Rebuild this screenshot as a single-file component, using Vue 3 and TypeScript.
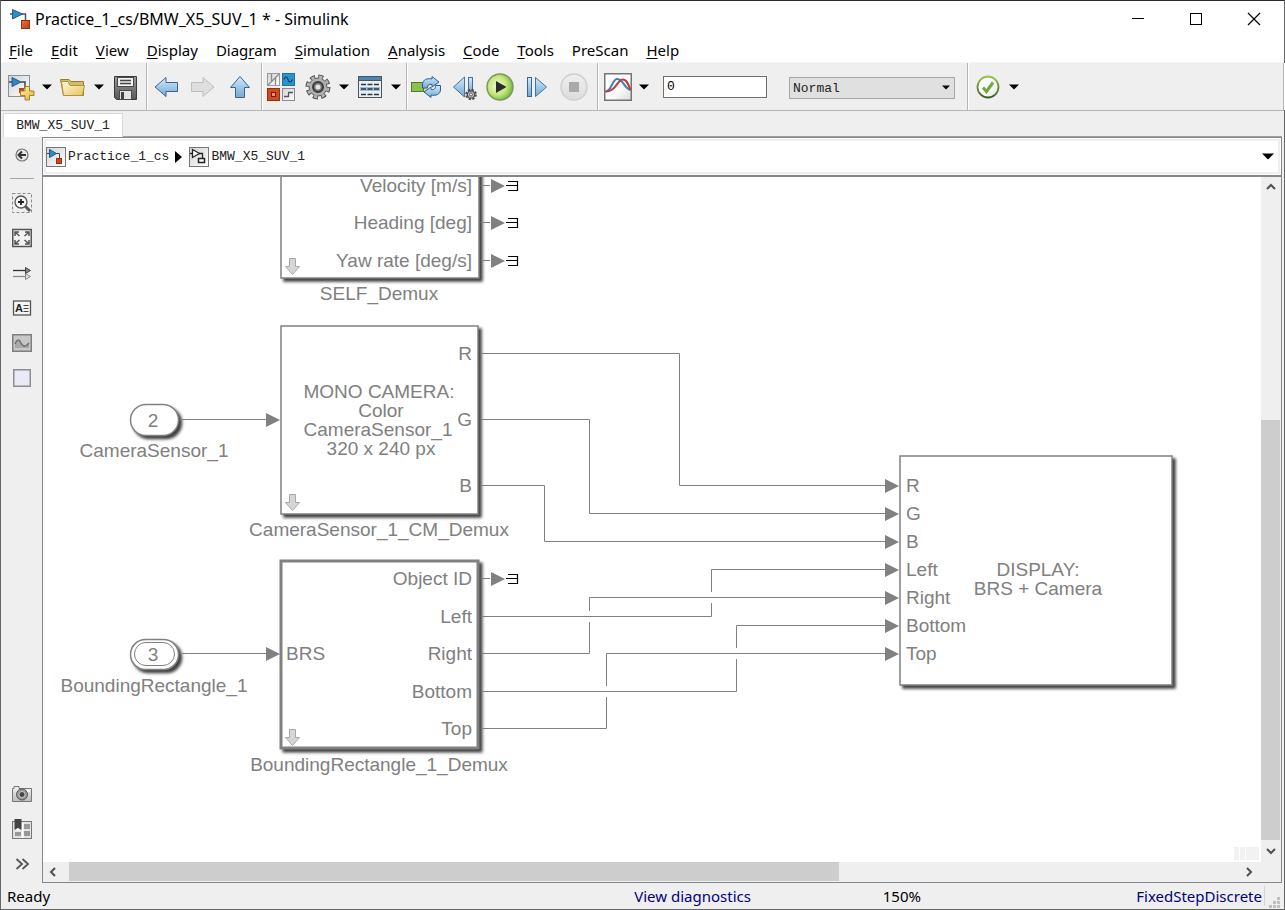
<script setup lang="ts">
import { ref } from 'vue'

interface MenuEntry {
  before: string
  key: string
  after: string
}

interface Port {
  text: string
  y: number
}

const menus: MenuEntry[] = [
  { before: '', key: 'F', after: 'ile' },
  { before: '', key: 'E', after: 'dit' },
  { before: '', key: 'V', after: 'iew' },
  { before: '', key: 'D', after: 'isplay' },
  { before: 'Diag', key: 'r', after: 'am' },
  { before: '', key: 'S', after: 'imulation' },
  { before: '', key: 'A', after: 'nalysis' },
  { before: '', key: 'C', after: 'ode' },
  { before: '', key: 'T', after: 'ools' },
  { before: 'PreScan', key: '', after: '' },
  { before: '', key: 'H', after: 'elp' },
]

const stopTime = ref('0')
const mode = ref('Normal')

// Diagram coordinates; the view is scrolled by the translate on the root group.
const selfPorts: Port[] = [
  { text: 'Velocity [m/s]', y: 186 },
  { text: 'Heading [deg]', y: 223 },
  { text: 'Yaw rate [deg/s]', y: 261 },
]
const cameraPorts: Port[] = [
  { text: 'R', y: 354 },
  { text: 'G', y: 420 },
  { text: 'B', y: 486 },
]
const boxPorts: Port[] = [
  { text: 'Object ID', y: 579 },
  { text: 'Left', y: 617 },
  { text: 'Right', y: 654 },
  { text: 'Bottom', y: 692 },
  { text: 'Top', y: 729 },
]
const displayPorts: Port[] = [
  { text: 'R', y: 486 },
  { text: 'G', y: 514 },
  { text: 'B', y: 542 },
  { text: 'Left', y: 570 },
  { text: 'Right', y: 598 },
  { text: 'Bottom', y: 626 },
  { text: 'Top', y: 654 },
]
const terminators: number[] = [186, 223, 261, 579]
const drillArrows: number[] = [258, 494, 729]
const wires: string[] = [
  'M481 353.5H679.5V485.5H886',
  'M481 419.5H589.5V513.5H886',
  'M481 485.5H544.5V541.5H886',
  'M481 616.5H711.5V603M711.5 592V569.5H886',
  'M481 653.5H589.5V622M589.5 611V597.5H886',
  'M481 691.5H736.5V659M736.5 648V625.5H886',
  'M481 728.5H606.5V697M606.5 686V653.5H886',
  'M180 419.5H267',
  'M180 653.5H267',
]
const arrowHeads: { x: number; y: number }[] = [
  { x: 266, y: 420 },
  { x: 266, y: 654 },
  ...displayPorts.map((p) => ({ x: 885, y: p.y })),
]
</script>

<template>
  <div class="window">
    <svg class="defs" width="0" height="0" aria-hidden="true">
      <defs>
        <linearGradient id="gBlue" x1="0" y1="0" x2="0" y2="1">
          <stop offset="0" stop-color="#d3eafa" />
          <stop offset="1" stop-color="#6fa9d6" />
        </linearGradient>
        <linearGradient id="gPage" x1="0" y1="0" x2="1" y2="1">
          <stop offset="0" stop-color="#d2d3d5" />
          <stop offset="1" stop-color="#ffffff" />
        </linearGradient>
        <linearGradient id="gPlot" x1="0" y1="0" x2="1" y2="1">
          <stop offset="0" stop-color="#ffffff" />
          <stop offset="0.6" stop-color="#fafafa" />
          <stop offset="1" stop-color="#dcdcdc" />
        </linearGradient>
        <linearGradient id="gGray" x1="0" y1="0" x2="0" y2="1">
          <stop offset="0" stop-color="#f0f0f0" />
          <stop offset="1" stop-color="#bdbdbd" />
        </linearGradient>
        <linearGradient id="gStop" x1="0" y1="0" x2="0" y2="1">
          <stop offset="0" stop-color="#efefef" />
          <stop offset="1" stop-color="#dcdcdc" />
        </linearGradient>
        <linearGradient id="gDark" x1="0" y1="0" x2="0" y2="1">
          <stop offset="0" stop-color="#9a9a9a" />
          <stop offset="1" stop-color="#585858" />
        </linearGradient>
        <linearGradient id="gFolder" x1="0" y1="0" x2="1" y2="1">
          <stop offset="0" stop-color="#fffbe0" />
          <stop offset="1" stop-color="#e7c45c" />
        </linearGradient>
        <linearGradient id="gPlus" x1="0" y1="0" x2="1" y2="1">
          <stop offset="0" stop-color="#fff8b8" />
          <stop offset="1" stop-color="#dfae2c" />
        </linearGradient>
        <linearGradient id="gRed" x1="0" y1="0" x2="1" y2="1">
          <stop offset="0" stop-color="#e8734a" />
          <stop offset="1" stop-color="#c23a12" />
        </linearGradient>
        <radialGradient id="gGreen" cx="0.4" cy="0.45" r="0.65">
          <stop offset="0" stop-color="#f0fad8" />
          <stop offset="0.55" stop-color="#c4e67c" />
          <stop offset="1" stop-color="#5fae3a" />
        </radialGradient>
        <linearGradient id="gRing" x1="0" y1="0" x2="0" y2="1">
          <stop offset="0" stop-color="#9ac54b" />
          <stop offset="1" stop-color="#3c5f22" />
        </linearGradient>
      </defs>
    </svg>

    <header class="titlebar">
      <svg class="app-icon" width="22" height="22" viewBox="0 0 22 22">
        <path d="M0 6H4M11 6H15.500V13" fill="none" stroke="#4d5560" stroke-width="1.500" />
        <path d="M2.500 1.500V11L12.500 6Z" fill="#2f8ccb" stroke="#215f8c" />
        <rect x="11.500" y="12.500" width="8" height="8" fill="url(#gRed)" stroke="#94300f" />
      </svg>
      <h1 class="title">Practice_1_cs/BMW_X5_SUV_1 * - Simulink</h1>
      <div class="controls">
        <button type="button" aria-label="Minimize">
          <svg width="14" height="14" viewBox="0 0 14 14"><path d="M1 6.500H13" stroke="#000" /></svg>
        </button>
        <button type="button" aria-label="Maximize">
          <svg width="14" height="14" viewBox="0 0 14 14"><rect x="1.500" y="1.500" width="11" height="11" fill="none" stroke="#000" /></svg>
        </button>
        <button type="button" aria-label="Close">
          <svg width="14" height="14" viewBox="0 0 14 14"><path d="M1 1L13 13M13 1L1 13" stroke="#000" stroke-width="1.200" /></svg>
        </button>
      </div>
    </header>

    <nav class="menubar">
      <button v-for="m in menus" :key="m.before + m.key" type="button">{{ m.before }}<u v-if="m.key">{{ m.key }}</u>{{ m.after }}</button>
    </nav>

    <div class="toolbar">
      <div class="group file">
        <button class="tool" type="button" aria-label="New model">
          <svg viewBox="0 0 28 28">
            <rect x="1.500" y="2.500" width="21" height="21" fill="url(#gPage)" stroke="#8b9095" />
            <path d="M2 9H6M14 9H18V16" fill="none" stroke="#3c4650" stroke-width="1.500" />
            <path d="M5 4.500V13.500L14 9Z" fill="#3187c4" stroke="#1e5a87" />
            <rect x="12" y="15" width="5" height="5" fill="#c8431c" />
            <path d="M18 13.500H22.500V18H27V22.500H22.500V27H18V22.500H13.500V18H18Z" fill="url(#gPlus)" stroke="#a8812a" />
          </svg>
        </button>
        <button class="dropdown" type="button" aria-label="New options"><svg viewBox="0 0 10 6"><path d="M0 0.500H10L5 5.500Z" /></svg></button>
        <button class="tool" type="button" aria-label="Open">
          <svg viewBox="0 0 28 28">
            <path d="M4.500 22.500L1.500 6.500H10L12 8.500H24.500V22.500Z" fill="#d9b966" stroke="#9c7a2c" />
            <path d="M4.500 22.500L2.500 8.500H9L11 12.500H25.500L23.500 22.500Z" fill="url(#gFolder)" stroke="#b3923f" />
          </svg>
        </button>
        <button class="dropdown" type="button" aria-label="Open options"><svg viewBox="0 0 10 6"><path d="M0 0.500H10L5 5.500Z" /></svg></button>
        <button class="tool" type="button" aria-label="Save">
          <svg viewBox="0 0 28 28">
            <path d="M3.500 3.500H25.500V26.500H5.500L3.500 24.500Z" fill="url(#gDark)" stroke="#3a3a3a" />
            <rect x="6.500" y="4.500" width="16" height="9" fill="#f1f1f1" stroke="#4a4a4a" />
            <path d="M9 7.500H20M9 10.500H20" stroke="#444" stroke-width="1.500" />
            <rect x="8.500" y="17.500" width="12" height="9" fill="#e3e3e3" stroke="#4a4a4a" />
            <rect x="10" y="19" width="3" height="7" fill="#444" />
          </svg>
        </button>
      </div>
      <div class="group nav">
        <button class="tool" type="button" aria-label="Back">
          <svg viewBox="0 0 28 28"><path d="M2 14L13 4.500V9.500H24.500V18.500H13V23.500Z" fill="url(#gBlue)" stroke="#3f648a" stroke-linejoin="round" /></svg>
        </button>
        <button class="tool" type="button" aria-label="Forward">
          <svg viewBox="0 0 28 28"><path d="M24 14L13 4.500V9.500H1.500V18.500H13V23.500Z" fill="#dedede" stroke="#bdbdbd" stroke-linejoin="round" /></svg>
        </button>
        <button class="tool" type="button" aria-label="Up">
          <svg viewBox="0 0 28 28"><path d="M13 3.500L22.500 14.500H17.500V24.500H8.500V14.500H3.500Z" fill="url(#gBlue)" stroke="#3f648a" stroke-linejoin="round" /></svg>
        </button>
      </div>
      <div class="group model">
        <button class="tool" type="button" aria-label="Library browser">
          <svg viewBox="0 0 28 28">
            <rect x="0.500" y="0.500" width="12" height="12" fill="url(#gPage)" stroke="#9a9a9a" />
            <path d="M1 12L12 1M4.500 1V8M8.500 4.500V12" stroke="#8a8a8a" fill="none" stroke-width="1.300" />
            <rect x="15.500" y="0.500" width="12" height="12" fill="#2a94cf" stroke="#2272a0" />
            <path d="M17 6.500C18 3 20 3 21 6.500S24 10 25.500 6.500" fill="none" stroke="#0c4a73" stroke-width="1.300" />
            <rect x="0.500" y="15.500" width="12" height="12" fill="#d14a1f" stroke="#94300f" />
            <rect x="4.500" y="19.500" width="4" height="4" fill="#f09070" stroke="#6e1f08" />
            <rect x="15.500" y="15.500" width="12" height="12" fill="url(#gPage)" stroke="#8a8a8a" />
            <path d="M17 23.500H21.500V19.500H26" fill="none" stroke="#555" stroke-width="1.300" />
          </svg>
        </button>
        <button class="tool" type="button" aria-label="Model configuration">
          <svg viewBox="0 0 28 28">
            <circle cx="14" cy="14" r="10.500" fill="none" stroke="#4c4c4c" stroke-width="4" stroke-dasharray="5 3.247" />
            <circle cx="14" cy="14" r="10.300" fill="none" stroke="#b4b4b4" stroke-width="2.400" stroke-dasharray="3.300 4.790" stroke-dashoffset="-0.800" />
            <circle cx="14" cy="14" r="9" fill="#b0b0b0" stroke="#5c5c5c" />
            <circle cx="14" cy="14" r="9" fill="none" stroke="#b4b4b4" stroke-width="1.400" stroke-dasharray="2.800 4.270" stroke-dashoffset="-0.700" />
            <circle cx="14" cy="14" r="5" fill="#7d7d7d" stroke="#3c3c3c" stroke-width="2" />
            <circle cx="14" cy="14" r="2.500" fill="#e4e4e4" />
          </svg>
        </button>
        <button class="dropdown" type="button" aria-label="Configuration options"><svg viewBox="0 0 10 6"><path d="M0 0.500H10L5 5.500Z" /></svg></button>
        <button class="tool" type="button" aria-label="Model explorer">
          <svg viewBox="0 0 28 28">
            <rect x="2.500" y="3.500" width="23" height="21" fill="#eceff1" stroke="#4b545c" />
            <rect x="3" y="4" width="22" height="3" fill="#4d86b5" />
            <path d="M3 7.500H25" stroke="#4b545c" />
            <rect x="4" y="14" width="20" height="4" fill="#8fc1e6" />
            <path d="M5 11.500H10M11.500 11.500H16.500M18 11.500H23M5 16H10M11.500 16H16.500M18 16H23M5 21.500H10M11.500 21.500H16.500M18 21.500H23" stroke="#333" stroke-width="1.500" />
          </svg>
        </button>
        <button class="dropdown" type="button" aria-label="Explorer options"><svg viewBox="0 0 10 6"><path d="M0 0.500H10L5 5.500Z" /></svg></button>
      </div>
      <div class="group run">
        <button class="tool" type="button" aria-label="Fast restart">
          <svg viewBox="0 0 28 28">
            <rect x="-0.500" y="9.500" width="12" height="9" fill="#8cc152" stroke="#4f7a26" />
            <rect x="12" y="10" width="3" height="8" fill="#bfe08f" />
            <path d="M10.500 15V11C11 6.500 15 5 20 6V3.500L27 9L20 14V11.500C17 11 15.500 12 15.500 15Z" fill="url(#gBlue)" stroke="#2f5f92" stroke-linejoin="round" />
            <path d="M28.500 12.500V17C28 21.500 24 23 19 22V24.500L12 19L19 14V16.500C22 17 23.500 16 23.500 12.500Z" fill="url(#gBlue)" stroke="#2f5f92" stroke-linejoin="round" />
          </svg>
        </button>
        <button class="tool" type="button" aria-label="Step back">
          <svg viewBox="0 0 28 28">
            <path d="M15.500 4V24L4.500 14Z" fill="url(#gBlue)" stroke="#4a7096" stroke-linejoin="round" />
            <rect x="19.500" y="4.500" width="4" height="16" fill="url(#gBlue)" stroke="#4a7096" />
            <circle cx="22" cy="21.500" r="4.800" fill="none" stroke="#4a4a4a" stroke-width="2" stroke-dasharray="2.200 1.570" />
            <circle cx="22" cy="21.500" r="3.700" fill="#bbb" stroke="#4a4a4a" stroke-width="1.200" />
            <circle cx="22" cy="21.500" r="1.500" fill="#f4f4f4" stroke="#555" />
          </svg>
        </button>
        <button class="tool" type="button" aria-label="Run">
          <svg viewBox="0 0 28 28">
            <circle cx="14" cy="14" r="13" fill="url(#gGreen)" stroke="#7f9a55" stroke-width="1.500" />
            <path d="M10 8V20L20.500 14Z" fill="#2c2c2c" />
          </svg>
        </button>
        <button class="tool" type="button" aria-label="Step forward">
          <svg viewBox="0 0 28 28">
            <rect x="4.500" y="4.500" width="4" height="19" fill="url(#gBlue)" stroke="#3f648a" />
            <path d="M12.500 4.500V23.500L23.500 14Z" fill="url(#gBlue)" stroke="#4a7096" stroke-linejoin="round" />
          </svg>
        </button>
        <button class="tool" type="button" aria-label="Stop">
          <svg viewBox="0 0 28 28">
            <circle cx="14" cy="14" r="13" fill="url(#gStop)" stroke="#cfcfcf" stroke-width="1.500" />
            <rect x="9" y="9" width="10" height="10" fill="#a9a9a9" />
          </svg>
        </button>
      </div>
      <div class="group sim">
        <button class="tool" type="button" aria-label="Data inspector">
          <svg viewBox="0 0 28 28">
            <rect x="0.750" y="0.750" width="26.500" height="26.500" fill="url(#gPlot)" stroke="#757575" stroke-width="1.500" />
            <path d="M1.500 18C7 20 8 6 13 6C19 6 20 15 26.500 17" fill="none" stroke="#3b7fc0" stroke-width="2" />
            <path d="M1.500 18.500C12 19 13 6.500 19 6.500C23 6.500 24 11 26.500 17" fill="none" stroke="#c23b3b" stroke-width="2" />
          </svg>
        </button>
        <button class="dropdown" type="button" aria-label="Inspector options"><svg viewBox="0 0 10 6"><path d="M0 0.500H10L5 5.500Z" /></svg></button>
        <input v-model="stopTime" class="stop-time" type="text" aria-label="Stop time" />
        <div class="mode">
          <select v-model="mode" aria-label="Simulation mode">
            <option>Normal</option>
          </select>
          <svg viewBox="0 0 8 5" aria-hidden="true"><path d="M0 0.500H8L4 4.500Z" /></svg>
        </div>
      </div>
      <div class="group check">
        <button class="tool" type="button" aria-label="Model advisor">
          <svg viewBox="0 0 28 28">
            <circle cx="14" cy="14" r="10.500" fill="url(#gPlot)" stroke="url(#gRing)" stroke-width="1.800" />
            <path d="M9 14.500L12.500 18.500L19 9.500" fill="none" stroke="#74a83c" stroke-width="3" />
          </svg>
        </button>
        <button class="dropdown" type="button" aria-label="Advisor options"><svg viewBox="0 0 10 6"><path d="M0 0.500H10L5 5.500Z" /></svg></button>
      </div>
    </div>

    <div class="tabs">
      <button class="tab" type="button">BMW_X5_SUV_1</button>
      <div class="tab-rest"></div>
    </div>

    <main class="main">
      <aside class="palette">
        <button type="button" aria-label="Hide browser">
          <svg viewBox="0 0 20 20">
            <circle cx="10" cy="10" r="6" fill="#e8e8e8" stroke="#777" stroke-width="1.200" />
            <path d="M14 10H8M10 6.500L6.500 10L10 13.500" fill="none" stroke="#333" stroke-width="2" />
          </svg>
        </button>
        <hr />
        <button type="button" aria-label="Zoom">
          <svg viewBox="0 0 20 20">
            <rect x="0.500" y="0.500" width="19" height="19" fill="none" stroke="#888" stroke-dasharray="3 2" />
            <circle cx="9" cy="9" r="6" fill="#f6f6f6" stroke="#555" stroke-width="1.300" />
            <path d="M6 9H12M9 6V12" stroke="#222" stroke-width="1.800" />
            <path d="M13.500 13.500L18 18" stroke="#555" stroke-width="3" />
          </svg>
        </button>
        <button type="button" aria-label="Fit to view">
          <svg viewBox="0 0 20 20">
            <rect x="0.750" y="1.500" width="18.500" height="17" fill="#f2f2f2" stroke="#555" stroke-width="1.500" />
            <path d="M3 8V4H7M3.500 4.500L7.500 8M17 8V4H13M16.500 4.500L12.500 8M3 12V16H7M3.500 15.500L7.500 12M17 12V16H13M16.500 15.500L12.500 12" fill="none" stroke="#555" stroke-width="1.500" />
          </svg>
        </button>
        <button type="button" aria-label="Sample time">
          <svg viewBox="0 0 20 20">
            <path d="M1 13.500H14" stroke="#888" stroke-width="1.300" />
            <path d="M13.500 10.500V16.500L18.500 13.500Z" fill="#ddd" stroke="#888" />
            <path d="M1 7.500H14" stroke="#333" stroke-width="1.300" />
            <path d="M13.500 4.500V10.500L18.500 7.500Z" fill="#888" stroke="#444" />
          </svg>
        </button>
        <button type="button" aria-label="Annotation">
          <svg viewBox="0 0 20 20">
            <rect x="1.500" y="3" width="17" height="14" fill="#f5f5f5" stroke="#555" stroke-width="1.300" />
            <text x="3" y="14" class="glyph">A</text>
            <path d="M11.500 7.500H16.500M11.500 10.500H16.500M11.500 13.500H16.500" stroke="#444" />
          </svg>
        </button>
        <button type="button" aria-label="Image">
          <svg viewBox="0 0 20 20">
            <rect x="0.750" y="1.750" width="18.500" height="16.500" fill="#c8c8c8" stroke="#808080" stroke-width="1.500" />
            <path d="M3 11C5 6 7 6 9 10S13 13 17 10V15H3Z" fill="#a8a8a8" />
            <path d="M3 11C5 6 7 6 9 10S14 14 17 10" fill="none" stroke="#6e6e6e" stroke-width="1.500" />
          </svg>
        </button>
        <button type="button" aria-label="Area">
          <svg viewBox="0 0 20 20"><rect x="1.750" y="1.750" width="16.500" height="16.500" fill="#e9e9f7" stroke="#8d8d8d" stroke-width="1.500" /></svg>
        </button>
        <button class="push" type="button" aria-label="Screenshot">
          <svg viewBox="0 0 20 20">
            <path d="M0.500 4.500H2V2.500H7V4.500H19.500V17.500H0.500Z" fill="url(#gGray)" stroke="#777" />
            <circle cx="10" cy="10.500" r="5.500" fill="#999" stroke="#555" />
            <circle cx="10" cy="10.500" r="3" fill="#444" stroke="#ccc" />
            <rect x="15" y="6" width="3" height="2" fill="#fff" />
          </svg>
        </button>
        <button type="button" aria-label="Bookmarks">
          <svg viewBox="0 0 20 20">
            <rect x="0.500" y="2.500" width="19" height="17" fill="#e2e2e2" stroke="#777" />
            <path d="M10.500 4V19" stroke="#fff" stroke-width="2" />
            <rect x="12" y="5" width="6" height="5" fill="#999" />
            <rect x="12" y="12" width="6" height="5" fill="#999" />
            <rect x="3" y="13" width="6" height="4" fill="#999" />
            <path d="M2.500 0H9.500V11L6 9L2.500 11Z" fill="#444" />
            <path d="M3 11.500L6 9L9 11.500" fill="#fff" />
          </svg>
        </button>
        <button type="button" aria-label="More">
          <svg viewBox="0 0 20 20"><path d="M4.500 5L10 10L4.500 15M10.500 5L16 10L10.500 15" fill="none" stroke="#555" stroke-width="1.800" /></svg>
        </button>
      </aside>

      <section class="workspace">
        <div class="address">
          <nav class="crumbs">
            <svg width="20" height="20" viewBox="0 0 20 20">
              <rect x="0.500" y="0.500" width="19" height="19" fill="url(#gPage)" stroke="#777" />
              <path d="M1 6.500H4M10 6.500H13.500V11" fill="none" stroke="#444" />
              <path d="M3.500 2.500V10.500L10.500 6.500Z" fill="#2f8ccb" stroke="#1e5a87" />
              <rect x="10.500" y="11.500" width="5" height="5" fill="#d2451c" stroke="#94300f" />
            </svg>
            <a href="#">Practice_1_cs</a>
            <svg class="sep" width="7" height="12" viewBox="0 0 7 12"><path d="M0 0L7 6L0 12Z" /></svg>
            <svg width="20" height="20" viewBox="0 0 20 20">
              <rect x="0.500" y="0.500" width="19" height="19" fill="url(#gPage)" stroke="#777" />
              <path d="M1 6.500H4M10 6.500H13.500V11" fill="none" stroke="#222" stroke-width="1.300" />
              <path d="M3.500 2.500V10.500L10.500 6.500Z" fill="#fff" stroke="#222" stroke-width="1.300" />
              <rect x="9.500" y="11.500" width="6" height="4" fill="#fff" stroke="#222" stroke-width="1.500" />
            </svg>
            <a href="#">BMW_X5_SUV_1</a>
            <button class="history" type="button" aria-label="History">
              <svg width="12" height="7" viewBox="0 0 12 7"><path d="M0 0.500H12L6 6.500Z" /></svg>
            </button>
          </nav>
        </div>

        <div class="view">
          <div class="canvas">
            <svg class="diagram">
              <g transform="translate(-43 -177)">
                <g class="block">
                  <rect x="281" y="90" width="198" height="188" />
                  <rect x="281" y="326" width="197" height="188" />
                  <rect class="heavy" x="281" y="561" width="197" height="187" />
                  <rect x="900" y="456" width="272" height="229" />
                  <rect x="130.500" y="404.500" width="48" height="31" rx="15.500" />
                  <rect x="130.500" y="639.500" width="48" height="30" rx="15" />
                </g>
                <rect class="inner" x="134.500" y="642.500" width="40" height="23" rx="11.500" />

                <path v-for="w in wires" :key="w" class="wire" :d="w" />
                <path v-for="a in arrowHeads" :key="a.x + '-' + a.y" class="head" :d="`M${a.x} ${a.y - 7}V${a.y + 7}L${a.x + 14} ${a.y}Z`" />

                <g v-for="y in terminators" :key="'t' + y">
                  <path class="wire" :d="`M481 ${y - 0.5}H490`" />
                  <path class="head" :d="`M491 ${y - 7}V${y + 7}L505 ${y}Z`" />
                  <path class="term" :d="`M506 ${y - 0.5}H518M508 ${y - 4.5}H517.500V${y + 4.5}H508`" />
                </g>

                <path
                  v-for="y in drillArrows"
                  :key="'d' + y"
                  class="drill"
                  :d="`M289.500 ${y + 0.5}H295.500V${y + 8.5}H299.500L292.500 ${y + 16.5}L285.500 ${y + 8.5}H289.500Z`"
                />

                <g class="end">
                  <text v-for="p in selfPorts" :key="p.text" x="472" :y="p.y + 6">{{ p.text }}</text>
                  <text v-for="p in cameraPorts" :key="p.text" x="472" :y="p.y + 6">{{ p.text }}</text>
                  <text v-for="p in boxPorts" :key="p.text" x="472" :y="p.y + 6">{{ p.text }}</text>
                </g>
                <g>
                  <text v-for="p in displayPorts" :key="p.text" x="906" :y="p.y + 6">{{ p.text }}</text>
                  <text x="286" y="660">BRS</text>
                </g>
                <g class="middle">
                  <text x="379" y="300">SELF_Demux</text>
                  <text x="379" y="398">MONO CAMERA:</text>
                  <text x="381" y="417">Color</text>
                  <text x="378" y="436">CameraSensor_1</text>
                  <text x="381" y="455">320 x 240 px</text>
                  <text x="379" y="536">CameraSensor_1_CM_Demux</text>
                  <text x="379" y="771">BoundingRectangle_1_Demux</text>
                  <text x="153" y="427">2</text>
                  <text x="153" y="661">3</text>
                  <text x="154" y="457">CameraSensor_1</text>
                  <text x="154" y="692">BoundingRectangle_1</text>
                  <text x="1038" y="576">DISPLAY:</text>
                  <text x="1038" y="595">BRS + Camera</text>
                </g>
              </g>
            </svg>
            <div class="gauge"><i></i><i></i><i class="wide"></i></div>
          </div>

          <div class="vbar">
            <button type="button" aria-label="Scroll up"><svg width="10" height="10" viewBox="0 0 10 10"><path d="M1 7L5 3L9 7" /></svg></button>
            <div class="space"></div>
            <div class="thumb"></div>
            <button class="far" type="button" aria-label="Scroll down"><svg width="10" height="10" viewBox="0 0 10 10"><path d="M1 3L5 7L9 3" /></svg></button>
          </div>

          <div class="hbar">
            <button type="button" aria-label="Scroll left"><svg width="10" height="10" viewBox="0 0 10 10"><path d="M7 1L3 5L7 9" /></svg></button>
            <div class="thumb"></div>
            <div class="space"></div>
            <button class="far" type="button" aria-label="Scroll right"><svg width="10" height="10" viewBox="0 0 10 10"><path d="M3 1L7 5L3 9" /></svg></button>
          </div>
          <div class="corner"></div>
        </div>
      </section>
    </main>

    <footer class="status">
      <span>Ready</span>
      <a href="#">View diagnostics</a>
      <span>150%</span>
      <a class="solver" href="#">FixedStepDiscrete</a>
      <svg class="grip" width="12" height="12" viewBox="0 0 12 12">
        <path d="M8 0H11V3H8ZM4 4H7V7H4ZM8 4H11V7H8ZM0 8H3V11H0ZM4 8H7V11H4ZM8 8H11V11H8Z" fill="#bfbfbf" />
      </svg>
    </footer>
  </div>
</template>

<style>
body {
  margin: 0;
}
</style>

<style scoped>
.window {
  box-sizing: border-box;
  display: flex;
  flex-direction: column;
  min-height: 100vh;
  border: 1px solid #666;
  border-top-color: #2a2a2e;
  background: #efefef;
  color: #000;
  font-family: 'Noto Sans', 'Open Sans', sans-serif;
  font-size: 15px;
}
.defs {
  position: absolute;
}
button {
  display: flex;
  align-items: center;
  justify-content: center;
  margin: 0;
  padding: 0;
  border: 0;
  background: none;
  color: inherit;
  font: inherit;
}
svg {
  display: block;
  flex: none;
}

.titlebar {
  box-sizing: border-box;
  display: flex;
  align-items: center;
  height: 37px;
  padding: 0 1px 1px 9px;
  background: #fff;
}
.title {
  flex: 1;
  margin: 0;
  padding-left: 3px;
  font-size: 16px;
  font-weight: 400;
  line-height: 20px;
}
.controls {
  display: flex;
  align-self: stretch;
}
.controls button {
  width: 58px;
}

.menubar {
  display: flex;
  gap: 18px;
  height: 24px;
  padding-left: 8px;
  background: #fff;
}
.menubar button {
  display: block;
  line-height: 24px;
  white-space: pre;
}
.menubar u {
  text-underline-offset: 2px;
}

.toolbar {
  display: flex;
  height: 47px;
  border-top: 1px solid #f4f4f4;
  border-bottom: 1px solid #b4b4b4;
}
.group {
  display: flex;
  align-items: center;
  border-right: 1px solid #b4b4b4;
  box-shadow: 1px 0 #fff;
}
.group + .group {
  margin-left: 1px;
}
.group:last-child {
  flex: 1;
}
.file {
  padding: 0 7px 0 6px;
}
.nav {
  padding: 0 6px 0 5px;
}
.model {
  padding-left: 4px;
}
.run {
  padding: 0 9px 0 4px;
}
.sim {
  padding: 0 12px 0 5px;
}
.check {
  padding-left: 5px;
}
.tool {
  width: 28px;
  height: 28px;
}
.tool svg {
  width: 28px;
  height: 28px;
  overflow: visible;
}
.tool + .tool {
  margin-left: 9px;
}
.dropdown {
  width: 20px;
  height: 28px;
  margin-left: 2px;
}
.dropdown svg {
  width: 10px;
  height: 6px;
}
.dropdown + .tool {
  margin-left: 2px;
}
.stop-time {
  box-sizing: border-box;
  width: 104px;
  height: 22px;
  margin-left: 9px;
  padding: 0 3px;
  border: 1px solid #707070;
  border-radius: 0;
  background: #fff;
  font: 13px 'Liberation Mono', monospace;
}
.mode {
  position: relative;
  width: 166px;
  height: 22px;
  margin-left: 22px;
}
.mode select {
  box-sizing: border-box;
  width: 100%;
  height: 100%;
  padding: 0 3px;
  border: 1px solid #a8a8a8;
  border-radius: 0;
  background: #e0e0e0;
  color: #222;
  font: 13px 'Liberation Mono', monospace;
  appearance: none;
}
.mode svg {
  position: absolute;
  top: 9px;
  right: 5px;
  width: 8px;
  height: 5px;
  pointer-events: none;
}

.tabs {
  display: flex;
  height: 26px;
  padding-left: 2px;
}
.tab {
  box-sizing: border-box;
  width: 120px;
  margin-top: 2px;
  border: 1px solid #d8d8d8;
  border-bottom: 0;
  background: #fff;
  color: #222;
  font: 13px 'Liberation Mono', monospace;
}
.tab-rest {
  flex: 1;
  margin-right: 2px;
  border-bottom: 1px solid #a0a0a0;
}

.main {
  display: flex;
  flex: 1;
}
.palette {
  display: flex;
  flex-direction: column;
  width: 41px;
  padding-bottom: 2px;
}
.palette button {
  height: 35px;
}
.palette svg {
  width: 20px;
  height: 20px;
}
.palette hr {
  width: 24px;
  height: 1px;
  margin: 6px auto;
  border: 0;
  background: #a5a5a5;
}
.palette .push {
  margin-top: auto;
}
.glyph {
  fill: #222;
  font: bold 11px 'Liberation Sans', Arial, sans-serif;
}

.workspace {
  display: flex;
  flex: 1;
  flex-direction: column;
  min-width: 0;
  margin-right: 2px;
  border: 1px solid #828790;
}
.address {
  padding: 1px;
  border-bottom: 2px solid #828790;
  background: #fff;
}
.crumbs {
  display: flex;
  align-items: center;
  height: 31px;
  border: 2px solid #efefef;
}
.crumbs a {
  padding-left: 2px;
  color: #222;
  font: 13px 'Liberation Mono', monospace;
  text-decoration: none;
}
.crumbs .sep {
  margin: 0 7px 0 6px;
}
.history {
  margin-left: auto;
  padding: 0 4px;
}

.view {
  display: grid;
  flex: 1;
  grid-template-rows: 1fr 20px;
  grid-template-columns: 1fr 20px;
}
.canvas {
  position: relative;
  overflow: hidden;
  background: #fff;
}
.diagram {
  width: 100%;
  height: 100%;
}
.block rect {
  fill: #fff;
  stroke: #808080;
  stroke-width: 1.5;
  filter: drop-shadow(3px 3px 1.5px rgba(0, 0, 0, 0.75));
}
.block .heavy {
  stroke-width: 3;
}
.inner {
  fill: none;
  stroke: #808080;
}
.wire {
  fill: none;
  stroke: #808080;
}
.head {
  fill: #808080;
}
.term {
  fill: none;
  stroke: #000;
  stroke-width: 1.2;
}
.drill {
  fill: #d6d6d6;
  stroke: #a8a8a8;
}
.diagram text {
  fill: #808080;
  font: 19px 'Liberation Sans', Arial, sans-serif;
}
.end {
  text-anchor: end;
}
.middle {
  text-anchor: middle;
}
.gauge {
  position: absolute;
  right: 2px;
  bottom: 2px;
  display: flex;
  gap: 1px;
}
.gauge i {
  width: 5px;
  height: 13px;
  background: #f2f2f2;
}
.gauge .wide {
  width: 13px;
}

.vbar,
.hbar {
  display: flex;
}
.vbar {
  flex-direction: column;
}
.vbar button {
  height: 20px;
}
.vbar .far {
  height: 22px;
}
.hbar button {
  justify-content: flex-start;
  width: 26px;
  padding-left: 5px;
}
.hbar .far {
  width: 22px;
}
.thumb {
  background: #cdcdcd;
}
.vbar .space {
  flex: 223;
}
.vbar .thumb {
  flex: 420;
  margin-right: 1px;
}
.hbar .space {
  flex: 400;
}
.hbar .thumb {
  flex: 770;
  margin-bottom: 1px;
}
.vbar path,
.hbar path {
  fill: none;
  stroke: #505050;
  stroke-width: 2;
}

.status {
  display: grid;
  grid-template-columns: 626fr 248fr 253fr auto 16px;
  align-items: center;
  height: 26px;
  padding: 0 3px 0 6px;
}
.status a {
  color: #00007f;
  text-decoration: none;
}
.status .solver {
  padding-right: 2px;
  border-right: 1px solid #d4d4d4;
}
.status .grip {
  align-self: end;
  justify-self: end;
}
</style>
